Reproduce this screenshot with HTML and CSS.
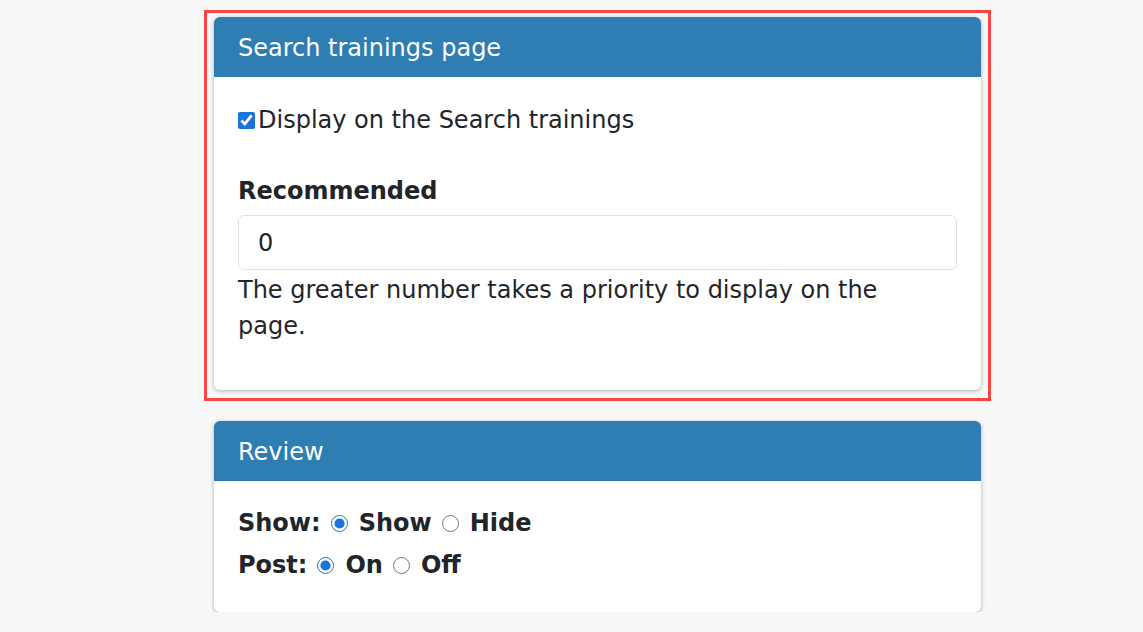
FILE: index.html
```
<!DOCTYPE html>
<html>
  <head>
    <title>Training settings</title>
    <link rel="stylesheet" href="styles.css">
  </head>
  <body>
    <div class="page">
      <div class="highlight">
        <div class="card">
          <div class="card-header">Search trainings page</div>
          <div class="card-body">
            <label class="check-row">
              <input type="checkbox" checked />Display on the Search trainings
            </label>

            <div class="field">
              <label class="field-label" for="recommended">Recommended</label>
              <input type="text" id="recommended" class="text-input" value="0" />
              <p class="help">The greater number takes a priority to display on the page.</p>
            </div>
          </div>
        </div>
      </div>

      <div class="card card-review">
        <div class="card-header">Review</div>
        <div class="card-body review-body">
          <div class="radio-row">
            <span>Show:</span>
            <label><input type="radio" name="show" checked />Show</label>
            <label><input type="radio" name="show" />Hide</label>
          </div>
          <div class="radio-row">
            <span>Post:</span>
            <label><input type="radio" name="post" checked />On</label>
            <label><input type="radio" name="post" />Off</label>
          </div>
        </div>
      </div>
    </div>
  </body>
</html>
```

FILE: styles.css
```
* {
  box-sizing: border-box;
  margin: 0;
  padding: 0;
}

body {
  font-family: "DejaVu Sans", Verdana, sans-serif;
  background-color: #f8f8f8;
  color: #212529;
  font-size: 24px;
  line-height: 36px;
}

.page {
  width: 787px;
  margin-left: 204px;
  padding-top: 10px;
}

/* Contorno rojo de la sección seleccionada */
.highlight {
  border: 3px solid #ff4444;
  padding: 4px 7px 8px 7px;
}

.card {
  background-color: #fff;
  border-radius: 6px;
  box-shadow: 0 1px 4px rgba(0, 0, 0, 0.3);
  overflow: hidden;
}

.card-review {
  margin: 20px 10px 0 10px;
}

.card-header {
  background-color: #2e7db3;
  color: #fff;
  height: 60px;
  padding: 13px 24px 11px 24px;
  line-height: 36px;
}

.card-body {
  padding: 25px 24px 46px 24px;
}

.check-row {
  display: flex;
  align-items: center;
}

.check-row input {
  width: 17px;
  height: 17px;
  margin: 0 3px 0 0;
  accent-color: #1a73d9;
}

.field {
  margin-top: 35px;
}

.field-label {
  display: block;
  font-weight: bold;
}

.text-input {
  display: block;
  width: 100%;
  height: 55px;
  margin-top: 6px;
  padding: 0 19px;
  border: 1px solid #dee2e6;
  border-radius: 6px;
  font-family: inherit;
  font-size: 24px;
  color: #212529;
}

.help {
  max-width: 680px;
  margin-top: 2px;
}

.review-body {
  padding: 21px 24px 26px 24px;
}

.radio-row {
  display: flex;
  align-items: center;
  gap: 10px;
  font-weight: bold;
  line-height: 42px;
}

.radio-row label {
  display: flex;
  align-items: center;
  gap: 11px;
}

.radio-row input {
  width: 17px;
  height: 17px;
  margin: 0;
  accent-color: #1a73d9;
}
```
